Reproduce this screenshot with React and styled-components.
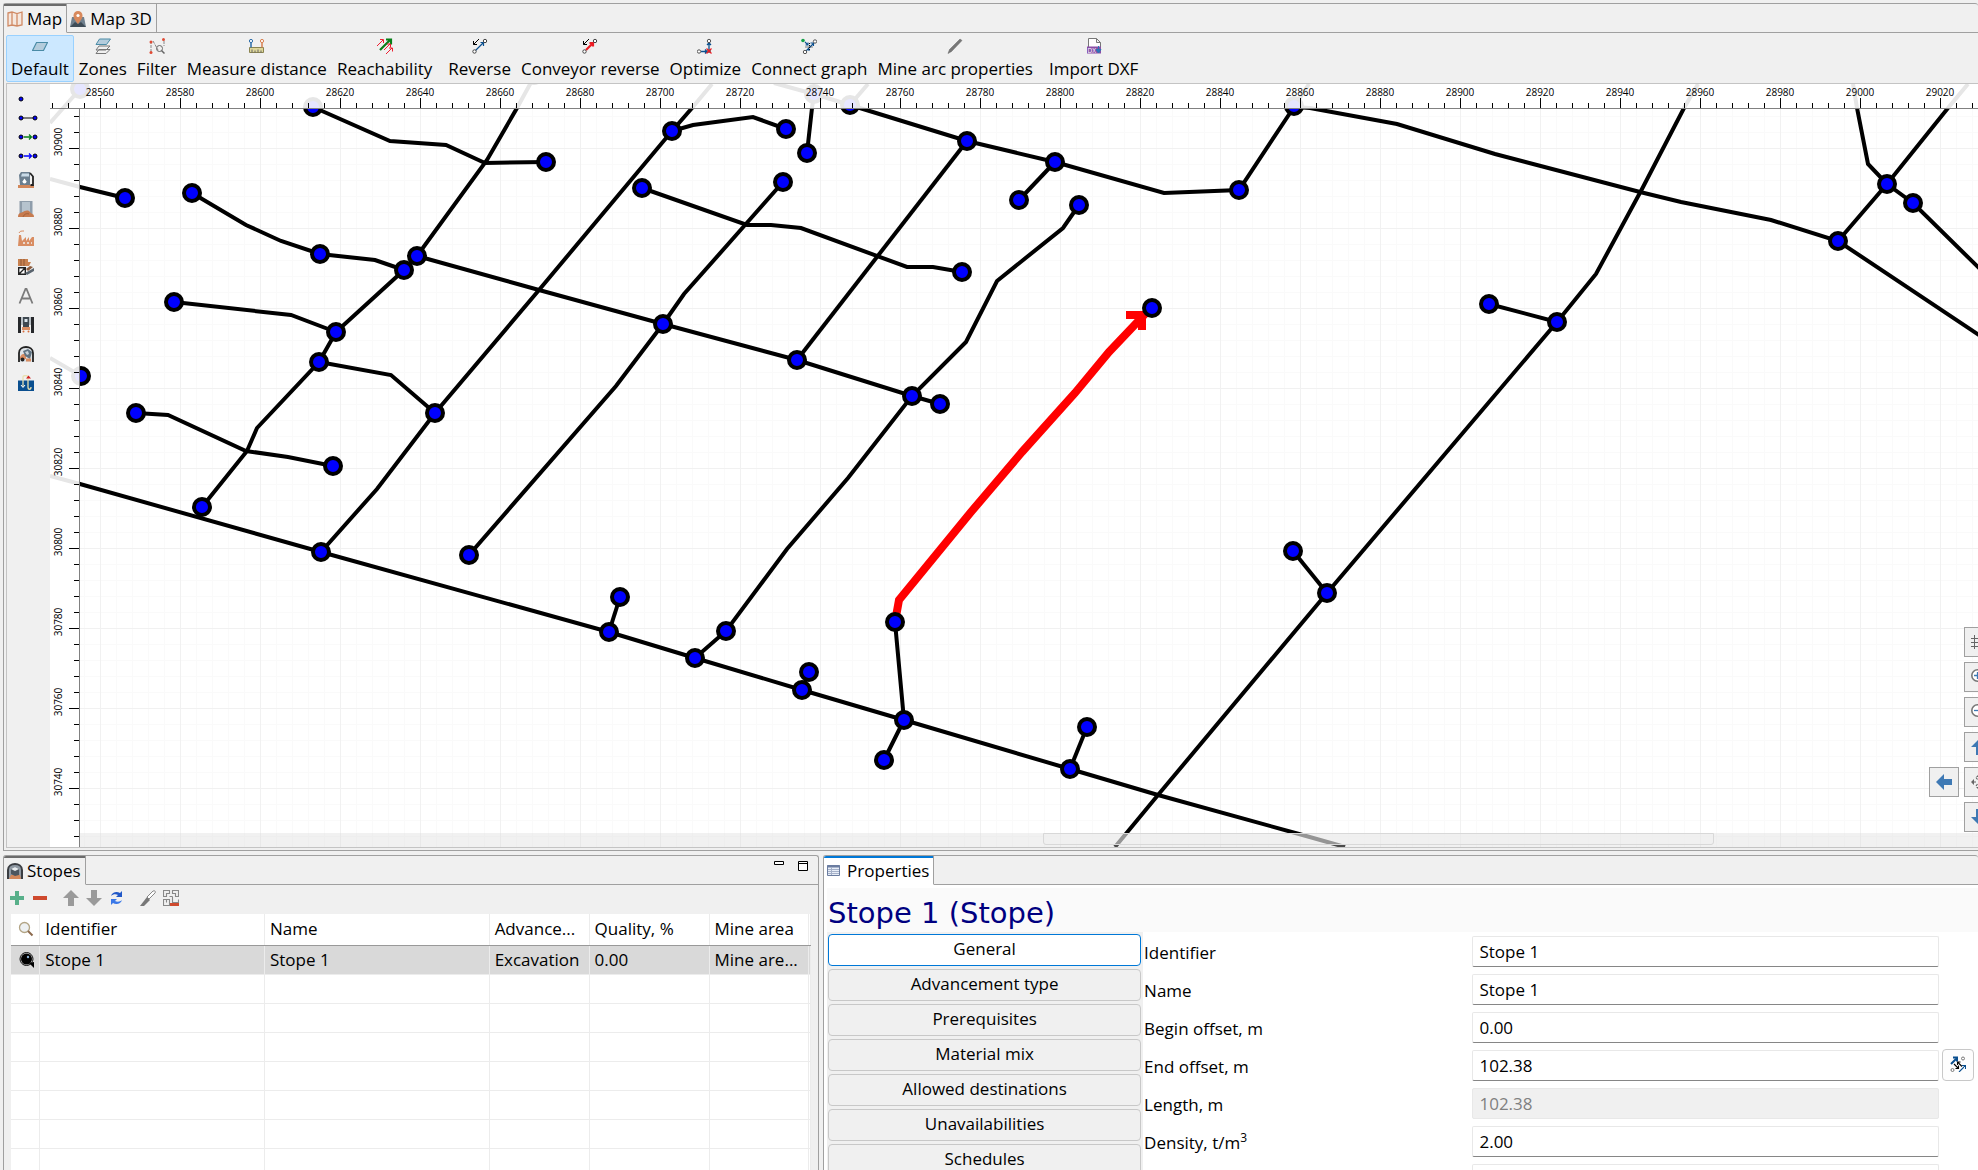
import React from "react"
import styled, { createGlobalStyle, css } from "styled-components"

//DATA
const modes = [
  { label: "Default", icon: "default", active: true },
  { label: "Zones", icon: "zones" },
  { label: "Filter", icon: "filter" },
  { label: "Measure distance", icon: "measure" },
  { label: "Reachability", icon: "reach", last: true },
  { label: "Reverse", icon: "reverse" },
  { label: "Conveyor reverse", icon: "conveyor" },
  { label: "Optimize", icon: "optimize" },
  { label: "Connect graph", icon: "connect" },
  { label: "Mine arc properties", icon: "pencil", last: true },
  { label: "Import DXF", icon: "dxf" },
]

const linkTools = ["node", "link", "greenLink", "blueLink"]
const objectTools = ["fuel", "silo", "factory", "crusher", "letter", "shaft", "tunnel", "water"]

const stopeColumns = [
  { label: "Identifier", width: "28.1%" },
  { label: "Name", width: "28.1%" },
  { label: "Advance...", width: "12.5%" },
  { label: "Quality, %", width: "15%" },
  { label: "Mine area", width: "12.5%" },
]
const stope = ["Stope 1", "Stope 1", "Excavation", "0.00", "Mine are..."]

const sections = [
  "General",
  "Advancement type",
  "Prerequisites",
  "Material mix",
  "Allowed destinations",
  "Unavailabilities",
  "Schedules",
]

const fields = [
  { id: "identifier", label: "Identifier", value: "Stope 1" },
  { id: "name", label: "Name", value: "Stope 1" },
  { id: "begin", label: "Begin offset, m", value: "0.00" },
  { id: "end", label: "End offset, m", value: "102.38", pick: true },
  { id: "length", label: "Length, m", value: "102.38", disabled: true },
  { id: "density", label: "Density, t/m", sup: "3", value: "2.00" },
  { id: "volume", label: "", value: "" },
]

// Odcinki grafu kopalni
const arcs = [
  "80,89 50,123",
  "313,107 390,141 446,145 485,163 546,162",
  "534,77 517,108 487,160 417,256",
  "672,131 693,125 753,117 786,129",
  "712,84 692,108 672,131 539,290 435,413 377,489 321,552",
  "774,83 814,94 850,105 967,141 1055,162 1164,193 1239,190 1294,107",
  "850,105 868,84",
  "814,94 812,108 807,153",
  "1294,107 1309,84",
  "50,179 80,187 125,198",
  "192,193 246,225 281,241 320,254 375,260 404,270",
  "174,302 291,315 336,332",
  "417,256 404,270 336,332 319,362 257,428 247,451 202,507",
  "319,362 391,375 435,413",
  "417,256 539,290 663,324 797,360 912,396 940,404",
  "783,182 745,225 684,294 663,324 616,386 469,555",
  "642,188 747,225 771,225 801,228 907,267 933,267 962,272",
  "967,141 797,360",
  "1055,162 1019,200",
  "1079,205 1063,228 997,281 966,342 912,396 848,478 787,549 726,631 695,658",
  "620,597 609,632",
  "50,358 81,376",
  "136,413 168,415 246,451 288,457 333,466",
  "50,476 80,484 321,552 609,632 695,658 802,690 904,720 1070,769 1158,795 1299,834 1345,847",
  "809,672 802,690",
  "895,622 904,720 884,760",
  "1087,727 1070,769",
  "1115,847 1158,795 1327,593 1557,322 1596,274 1642,189 1684,108 1698,84",
  "1293,551 1327,593",
  "1489,304 1557,322",
  "1294,107 1310,108 1397,124 1495,154 1640,192 1681,202 1771,220 1838,241 2042,377",
  "1838,241 1887,184 1948,108 1968,84",
  "1853,84 1857,108 1868,164 1887,184 1913,203 2048,336",
]

const nodes = [
  [80, 89], [313, 107], [534, 75], [546, 162], [672, 131], [786, 129], [807, 153], [783, 182],
  [642, 188], [967, 141], [1055, 162], [1019, 200], [1079, 205], [1239, 190], [1294, 106],
  [814, 94], [850, 105], [125, 198], [192, 193], [320, 254], [404, 270], [417, 256], [174, 302],
  [336, 332], [319, 362], [435, 413], [663, 324], [797, 360], [962, 272], [912, 396],
  [940, 404], [81, 376], [136, 413], [333, 466], [202, 507], [321, 552], [469, 555],
  [620, 597], [609, 632], [695, 658], [726, 631], [809, 672], [802, 690], [895, 622],
  [904, 720], [884, 760], [1070, 769], [1087, 727], [1152, 308], [1293, 551], [1327, 593],
  [1489, 304], [1557, 322], [1838, 241], [1887, 184], [1913, 203],
]

//STYLES
const GlobalStyle = createGlobalStyle`
  * {
    box-sizing: border-box;
  }
  body {
    margin: 0;
    background: #f0f0f0;
    color: #000;
    font-family: "Open Sans", "Noto Sans", sans-serif;
    font-size: 17px;
    line-height: 24px;
  }
  button,
  input {
    font: inherit;
    color: inherit;
  }
`

const Page = styled.div`
  display: grid;
  grid-template-rows: 851fr 319fr;
  height: 100vh;
  min-height: 700px;
  overflow: hidden;
`

const Panel = styled.section`
  display: flex;
  flex-direction: column;
  min-width: 0;
  min-height: 0;
  border: 1px solid #a0a0a0;
  border-radius: 3px 3px 0 0;
`

const MapPanel = styled(Panel)`
  margin: 3px 0 0 3px;
  border-right: 0;
`

const Tabs = styled.div`
  display: flex;
  flex: none;
  height: 29px;
`

const Tab = styled.button`
  display: flex;
  align-items: center;
  gap: 4px;
  flex: none;
  padding: 2px 4px 0 3px;
  border: 0;
  border-right: 1px solid #a0a0a0;
  border-bottom: 1px solid #a0a0a0;
  background: transparent;

  ${({ $active, $accent }) =>
    $active &&
    css`
      border-bottom-color: transparent;
      box-shadow: inset 0 2px 0 ${$accent || "#6b6b6b"};
    `}
`

const TabSpace = styled.div`
  display: flex;
  flex: 1;
  justify-content: flex-end;
  gap: 12px;
  padding: 5px 8px;
  border-bottom: 1px solid #a0a0a0;
`

const WindowButton = styled.button`
  display: flex;
  width: 12px;
  height: 12px;
  padding: 0;
  border: 0;
  background: none;
`

const ModeBar = styled.div`
  display: flex;
  flex: none;
  padding: 2px 2px 1px;
`

const ModeButton = styled.button`
  display: flex;
  flex-direction: column;
  align-items: center;
  gap: 3px;
  height: 47px;
  margin-right: ${({ $last }) => ($last ? "6px" : "0")};
  padding: 2px 4px 0;
  border: 1px solid ${({ $active }) => ($active ? "#99d1ff" : "transparent")};
  border-radius: 2px;
  background: ${({ $active }) => ($active ? "#cce8ff" : "transparent")};
  white-space: nowrap;
`

const MapBody = styled.div`
  display: flex;
  flex: 1;
  min-height: 0;
  margin: 0 0 2px 2px;
  border: 1px solid #c4c4c4;
  border-right: 0;
`

const Palette = styled.div`
  display: flex;
  flex-direction: column;
  flex: none;
  width: 43px;
  padding-top: 5px;
`

const PaletteButton = styled.button`
  display: flex;
  align-items: center;
  height: ${({ $small }) => ($small ? "19px" : "29px")};
  padding: 0 11px;
  border: 0;
  background: none;
`

const Canvas = styled.div`
  position: relative;
  flex: 1;
  min-width: 0;
  overflow: hidden;
  background: #fff;

  > svg {
    display: block;
    width: 100%;
    height: 100%;
  }
`

const ScrollStrip = styled.div`
  position: absolute;
  right: 0;
  bottom: 0;
  left: 30px;
  height: 14px;
  padding: 0 264px 2px 963px;
  background: rgba(215, 215, 215, 0.35);
`

const ScrollThumb = styled.div`
  height: 12px;
  border: 1px solid #d8d8d8;
  border-radius: 0 0 3px 3px;
  background: rgba(240, 240, 240, 0.45);
`

// Przyciski nawigacji po mapie
const Navigator = styled.div`
  position: absolute;
  right: -51px;
  bottom: 15px;
  display: grid;
  grid-template-columns: repeat(3, 30px);
  gap: 5px;
`

const NavButton = styled.button`
  display: flex;
  align-items: center;
  justify-content: center;
  grid-column: ${({ $column }) => $column || 2};
  height: 30px;
  padding: 0;
  border: 1px solid #a0a0a0;
  background: #f0f0f0;
`

const Bottom = styled.div`
  display: grid;
  grid-template-columns: 819fr 1159fr;
  gap: 4px;
  min-height: 0;
  padding: 4px 0 0 3px;
  overflow: hidden;
`

const StopesPanel = styled(Panel)`
  border-bottom: 0;
  overflow: hidden;
`

const StopesTools = styled.div`
  display: flex;
  align-items: center;
  flex: none;
  height: 29px;
  padding: 0 0 3px 5px;
`

const ToolButton = styled.button`
  display: flex;
  margin-right: ${({ $last }) => ($last ? "15px" : "7px")};
  padding: 0;
  border: 0;
  background: none;
`

const StopesTable = styled.table`
  width: calc(100% - 14px);
  margin-left: 7px;
  border-collapse: collapse;
  table-layout: fixed;
  background: #fff;

  th,
  td {
    overflow: hidden;
    height: 29px;
    padding: 0 0 0 5px;
    border-right: 1px solid #ececec;
    border-bottom: 1px solid #ececec;
    font-weight: 400;
    text-align: left;
    white-space: nowrap;
  }

  th {
    height: 31px;
    border-bottom-color: #999;
  }

  svg {
    display: block;
    margin-left: 2px;
  }
`

const StopeRow = styled.tr`
  background: ${({ $selected }) => ($selected ? "#d9d9d9" : "#fff")};
`

const PropertiesPanel = styled(Panel)`
  border-right: 0;
  border-bottom: 0;
  overflow: hidden;
  background: linear-gradient(#f0f0f0 29px, #fff 29px);

  ${Tab}[aria-selected="true"] {
    background: #fff;
  }
`

const Title = styled.h1`
  flex: none;
  height: 44px;
  margin: 3px 0 0 3px;
  padding-left: 1px;
  background: #fafafa;
  color: #000080;
  font-family: Verdana, "DejaVu Sans", sans-serif;
  font-size: 29px;
  font-weight: 400;
  line-height: 50px;
`

const PropertiesBody = styled.div`
  display: flex;
  align-items: flex-start;
  min-height: 0;
  padding-left: 3px;
`

const SectionList = styled.nav`
  display: flex;
  flex-direction: column;
  flex: 0 0 316px;
  gap: 3px;
  padding: 2px 2px 0 1px;
  background: #f0f0f0;
`

const SectionButton = styled.button`
  height: 32px;
  padding: 0 0 2px;
  border: 1px solid ${({ $active }) => ($active ? "#0078d7" : "#c8c8c8")};
  border-radius: 4px;
  background: ${({ $active }) => ($active ? "#fff" : "#f0f0f0")};
`

const Form = styled.form`
  display: flex;
  flex-direction: column;
  flex: 1;
  gap: 7px;
  padding: 4px 0 0 1px;
`

const Field = styled.div`
  display: grid;
  grid-template-columns: 328fr 466fr 39px;
  grid-template-rows: 31px;

  label {
    padding-top: 5px;
  }

  sup {
    font-size: 12px;
    line-height: 0;
  }

  input {
    min-width: 0;
    height: 31px;
    padding: 0 6px;
    border: 1px solid #e8e8e8;
    border-bottom-color: #868686;
    border-radius: 2px;
    background: #fff;
  }

  input:disabled {
    border-bottom-color: #e8e8e8;
    background: #f0f0f0;
    color: #808080;
  }
`

const PickButton = styled.button`
  display: flex;
  align-items: center;
  justify-content: center;
  align-self: end;
  width: 32px;
  height: 32px;
  margin-left: 3px;
  padding: 0 0 2px;
  border: 1px solid #c8c8c8;
  border-radius: 4px;
  background: #fdfdfd;
`

//COMPONENTS
const shapes = {
  default: <path d="M4.500 4.500h11l-4 8h-11z" fill="#b4ccdc" stroke="#4a8ba6" strokeWidth="1.200" />,
  zones: (
    <>
      <path d="M4 11.500h11l-4 4h-10z M4 8h11l-4 4h-10z" fill="#f0f0f0" stroke="#777" />
      <path d="M4.500 1h11l-4 5.500h-10.500z" fill="#b4ccdc" stroke="#4a8ba6" />
    </>
  ),
  filter: (
    <>
      <path d="M2 14V4M4 3l5 9M15 3v5" stroke="#888" strokeDasharray="3 1" fill="none" />
      <circle cx="10.500" cy="10.500" r="3" fill="none" stroke="#666" />
      <path d="M12.500 12.500l3 3" stroke="#666" strokeWidth="1.500" />
      <g fill="#e04b35">
        <circle cx="2" cy="4" r="1.500" />
        <circle cx="2" cy="14.500" r="1.500" />
        <circle cx="14.500" cy="1.500" r="1.500" />
      </g>
    </>
  ),
  measure: (
    <>
      <path d="M.5 9.500h14v5H.5z" fill="#ddd69a" stroke="#8a8450" />
      <path d="M3 14.500v-3M6 14.500v-2M9 14.500v-3M12 14.500v-2" stroke="#666" />
      <path d="M2 4.500v5" stroke="#2a6ca8" strokeWidth="1.500" />
      <path d="M13 4.500v5" stroke="#d88050" strokeWidth="1.500" />
      <circle cx="2" cy="3" r="1.600" fill="#fff" stroke="#2a6ca8" />
      <circle cx="13" cy="3" r="1.600" fill="#fff" stroke="#d88050" />
    </>
  ),
  reach: (
    <>
      <path d="M3 12L13 2M9 1.500h5v5" fill="none" stroke="#078018" strokeWidth="2.200" />
      <path d="M0 8l6-6M3 1.500h3.500V5M7 12l6-6M10 6h3.500v3.500M9 16l6-6M12 10h3.500v3.500" fill="none" stroke="#ec2031" />
    </>
  ),
  reverse: (
    <>
      <path d="M7 1L1.500 6.500M1.500 3v3.500H5" fill="none" stroke="#000" />
      <path d="M3.500 12.500l8-8M8.500 4.500h3V8" fill="none" stroke="#0a4f8f" strokeWidth="1.200" />
      <circle cx="2.500" cy="13.500" r="1.700" fill="#fff" stroke="#444" />
      <circle cx="13" cy="3" r="1.700" fill="#fff" stroke="#444" />
    </>
  ),
  conveyor: (
    <>
      <path d="M7 1L1.500 6.500M1.500 3v3.500H5" fill="none" stroke="#000" />
      <path d="M4 12l7-7M7.500 5H11v3.500" fill="none" stroke="#ed1c24" strokeWidth="2.200" />
      <circle cx="2.500" cy="13.500" r="1.700" fill="#fff" stroke="#444" />
      <circle cx="13" cy="3" r="1.700" fill="#fff" stroke="#444" />
    </>
  ),
  optimize: (
    <>
      <path d="M4 13.500h6M8 11.500l2 2-2 2M12 11V5M10 7l2-2 2 2" fill="none" stroke="#0a4f8f" strokeWidth="1.300" />
      <circle cx="2" cy="13.500" r="1.700" fill="#fff" stroke="#555" />
      <circle cx="12" cy="3" r="1.700" fill="#fff" stroke="#555" />
      <circle cx="12" cy="13" r="2" fill="#666" />
      <path d="M9.500 10.500l5 5m0-5l-5 5" stroke="#ed1c24" strokeWidth="1.200" />
    </>
  ),
  connect: (
    <>
      <path d="M4 4l3 3M7 4.500V7H4.500M5 13l8-8M9.500 5h3v3M8 13V9.500" fill="none" stroke="#0a4f8f" strokeWidth="1.100" />
      <path d="M8.500 5v8M4.500 9h8" stroke="#111" strokeDasharray="1 1" />
      <circle cx="2" cy="2.500" r="1.800" fill="#14a048" />
      <circle cx="14" cy="3.500" r="1.700" fill="#fff" stroke="#555" />
      <circle cx="4" cy="14" r="1.700" fill="#fff" stroke="#555" />
    </>
  ),
  pencil: <path d="M1 15.500l1.500-4L13 1l2 1.500L4.500 13.500z" fill="#777" stroke="#666" strokeWidth=".5" />,
  dxf: (
    <>
      <path d="M2.500 9V.5h8l4 4V9M10.500.5v4h4" fill="#fff" stroke="#777" />
      <rect x="1" y="8.500" width="14" height="7" fill="#8a4fa8" />
      <text x="1.500" y="14.500" fontSize="6.500" fill="#fff">
        DX
      </text>
      <path d="M12.500 8v6M10 11.500l2.500 3.500 2.500-3.500z" fill="#2e75b6" stroke="#2e75b6" />
    </>
  ),
  node: <circle cx="3" cy="8" r="2" fill="#00f" stroke="#000" />,
  link: (
    <>
      <path d="M3 8h14" stroke="#555" strokeWidth="1.500" />
      <circle cx="3" cy="8" r="2" fill="#00f" stroke="#000" />
      <circle cx="17" cy="8" r="2" fill="#00f" stroke="#000" />
    </>
  ),
  greenLink: (
    <>
      <path d="M6 8h7M11 5.500L13.500 8 11 10.500" fill="none" stroke="#078018" strokeWidth="1.300" />
      <circle cx="3" cy="8" r="2" fill="#00f" stroke="#000" />
      <circle cx="17" cy="8" r="2" fill="#00f" stroke="#000" />
    </>
  ),
  blueLink: (
    <>
      <path d="M6 8h7M11 5.500L13.500 8 11 10.500" fill="none" stroke="#00f" strokeWidth="1.300" />
      <circle cx="3" cy="8" r="2" fill="#00f" stroke="#000" />
      <circle cx="17" cy="8" r="2" fill="#00f" stroke="#000" />
    </>
  ),
  fuel: (
    <>
      <rect x="0" y="13" width="16" height="3" fill="#d2875a" />
      <path d="M1 3l2-3h9v13H2z" fill="#6b7f90" />
      <path d="M4 1.500h7v3H3z" fill="#c9dbe8" />
      <path d="M6.500 6.500l2 3a2 2 0 1 1-4 0z" fill="#fff" />
      <path d="M12 1l3 3.500V13h-2.500" fill="none" stroke="#222" strokeWidth="1.800" />
    </>
  ),
  silo: (
    <>
      <path d="M1.500 0h13v13h-13z" fill="#8f9dab" />
      <path d="M4 1h8v10H4z" fill="#b6c3ce" />
      <path d="M0 16c0-5 4-4 5-5s5-3 7 0 4 1 4 5z" fill="#c77b4f" />
      <path d="M5 16c1-3 4-4 6-3" stroke="#a35f38" fill="none" />
    </>
  ),
  factory: (
    <>
      <path d="M0 16L1 5h2l1 6 4-4v4l3-4v4l3-4h2v9z" fill="#d98d62" />
      <path d="M1 3c1-2 2-2 5-2" stroke="#d98d62" fill="none" />
      <path d="M5 13h2M9 13h2M13 13h1" stroke="#f0f0f0" strokeWidth="1.500" />
    </>
  ),
  crusher: (
    <>
      <path d="M0 0h10v3h3L11 7H0z" fill="#c8814f" />
      <path d="M3 0v7M6 0v7" stroke="#8f5732" />
      <path d="M.7 8.700h6.600v6.600H.7zM1 15l6-6" fill="#fff" stroke="#222" strokeWidth="1.400" />
      <path d="M7 14l9-5v3l-7 4z" fill="#59646e" />
      <path d="M8 10l4-3 3 1-5 4z" fill="#8a5a3c" />
    </>
  ),
  letter: <path d="M1.500 15.500L7.500 1h1l6 14.500M4 10.500h8" fill="none" stroke="#7b7b7b" strokeWidth="1.800" />,
  shaft: (
    <>
      <path d="M0 0h3v16H0zM13 0h3v16h-3z" fill="#26282b" />
      <path d="M3 0h2v8H3zM11 0h2v8h-2z" fill="#b9c0c6" />
      <path d="M5 0h6v10H5z" fill="#3f4850" />
      <path d="M6.500 2h3v3h-3z" fill="#dbe4ea" />
      <path d="M4 10h8v3H4z" fill="#d98d62" />
      <circle cx="5.500" cy="14.500" r="1" fill="#d96c3a" />
      <circle cx="10.500" cy="14.500" r="1" fill="#d96c3a" />
    </>
  ),
  tunnel: (
    <>
      <path d="M1 16V7c0-8 14-8 14 0v9" fill="#dfe4e8" stroke="#222" strokeWidth="1.800" />
      <path d="M2 11c1-3 4-4 6-3v5H2z" fill="#d98d62" />
      <path d="M5 5l5-2 4 3-2 7-5-3z" fill="#5f7382" />
      <path d="M7 6l3-1 1 3-2 1z" fill="#c9d3da" />
      <circle cx="4.500" cy="13.500" r="2" fill="#222" />
      <path d="M8 14h5" stroke="#d98d62" strokeWidth="3" />
    </>
  ),
  water: (
    <>
      <rect x="0" y="5.500" width="16" height="10.500" fill="#0a4f8f" />
      <path d="M5 12V2c0-2 5-2 5 0v10c0 3 3 3 3 0" fill="none" stroke="#e8e0b0" strokeWidth="1.300" />
      <path d="M3 10l2 2.500L7 10" fill="none" stroke="#fff" />
      <path d="M8 3.500L10.500.5 13 3.500z" fill="#d02020" />
    </>
  ),
  map: (
    <path d="M1 2l4-1 5 1.500 5-1.500v13l-5 1-5-1-4 1zM5 1v13M10 2.500V15" fill="#f5e8df" stroke="#d08a64" strokeWidth="1.300" />
  ),
  map3d: (
    <>
      <path d="M2 6h12l2 10H0z" fill="#70808e" />
      <path d="M0 16l5-5 3 2 3-2 5 5z" fill="#3f4c57" />
      <path d="M8 13C4 8 3.500 6.500 3.500 4.500a4.500 4.500 0 0 1 9 0C12.500 6.500 12 8 8 13z" fill="#d8895c" />
      <circle cx="8" cy="4.500" r="1.600" fill="#fff" />
    </>
  ),
  stopes: (
    <>
      <path d="M1 16V7c0-8 14-8 14 0v9" fill="#8f99a3" stroke="#3a3d42" strokeWidth="2" />
      <path d="M2 16l2-4h9l1 4z" fill="#d2875a" />
      <path d="M4 6l4-2 4 2v6l-4 1-4-2z" fill="#4c565f" />
      <path d="M4 6l4-2 4 2-4 2z" fill="#e9edf0" />
    </>
  ),
  sheet: (
    <>
      <path d="M.5 2.500h12v10H.5z" fill="#e8eef8" stroke="#6b7da0" />
      <path d="M0 3.500h13" stroke="#6b7da0" strokeWidth="2" />
      <path d="M1 6.500h11M1 8.500h11M1 10.500h11M4.500 4v8" stroke="#a5b1c9" />
    </>
  ),
  plus: <path d="M6 1h4v5h5v4h-5v5H6v-5H1V6h5z" fill="#58b08a" />,
  minus: <path d="M1 6h14v4H1z" fill="#cf4a2e" />,
  up: <path d="M8 0l8 8h-5v8H5V8H0z" fill="#9a9a9a" />,
  down: <path d="M8 16L0 8h5V0h6v8h5z" fill="#9a9a9a" />,
  refresh: (
    <>
      <path d="M2 6c1-4 6-5 9-3l2-2v6H7l2-2c-2-1-5-1-7 1z" fill="#2158c8" />
      <path d="M13 10c-1 4-6 5-9 3l-2 2V9h6l-2 2c2 1 5 1 7-1z" fill="#3a78e8" />
    </>
  ),
  brush: (
    <>
      <path d="M0 16l7-9 3 3-6 6z" fill="#777" />
      <path d="M7 7l6-6c2-1 3 1 2 2l-6 6z" fill="#fff" stroke="#888" />
    </>
  ),
  maze: (
    <>
      <path d="M.5.5h6v3h-3v3h-3zM9.500.5h6v6h-3v-3h-3zM.5 9.500h6v6h-6zM3.500 9.500v3M9.500 6.500v6h6v-3M6.500 6.500h3" fill="none" stroke="#888" strokeWidth="1.100" />
      <path d="M7 13h9v3H7z" fill="#cf4a2e" />
    </>
  ),
  lens: (
    <>
      <circle cx="6.500" cy="6.500" r="5" fill="#edf0f2" stroke="#b3a586" strokeWidth="1.300" />
      <path d="M10 10l4.500 4.500" stroke="#8c6a4d" strokeWidth="2" />
    </>
  ),
  lensDark: (
    <>
      <circle cx="8.500" cy="7" r="6.500" fill="none" stroke="#111" />
      <circle cx="8.500" cy="7" r="5.500" fill="#000" />
      <circle cx="10" cy="5" r="1.200" fill="#8fb4d8" />
      <path d="M11 11l5 5v-6z" fill="#000" />
    </>
  ),
  minimize: <path d="M.5.500h9v3h-9z" fill="#fff" stroke="#000" />,
  maximize: <path d="M.5.500h9v9h-9zM.5 2.500h9" fill="#fff" stroke="#000" />,
  grid: <path d="M3.500 1v14M9.500 1v14M0 4.500h14M0 8.500h14M0 12.500h14" stroke="#666" />,
  zoomIn: (
    <>
      <circle cx="6.500" cy="6.500" r="5.700" fill="#fff" stroke="#777" strokeWidth="1.600" />
      <path d="M3 6.500h7M6.500 3v7" stroke="#3e79b4" strokeWidth="1.300" />
      <path d="M11 11l4 4" stroke="#777" strokeWidth="2" />
    </>
  ),
  zoomOut: (
    <>
      <circle cx="6.500" cy="6.500" r="5.700" fill="#fff" stroke="#777" strokeWidth="1.600" />
      <path d="M3 6.500h7" stroke="#3e79b4" strokeWidth="1.300" />
      <path d="M11 11l4 4" stroke="#777" strokeWidth="2" />
    </>
  ),
  goUp: <path d="M8 0l8 8h-5v8H5V8H0z" fill="#3e79b4" />,
  goDown: <path d="M8 16L0 8h5V0h6v8h5z" fill="#3e79b4" />,
  goLeft: <path d="M0 8l8-8v5h8v6H8v5z" fill="#3e79b4" />,
  center: (
    <>
      <path d="M1 8h4M11 8h4M8 1v4M8 11v4M5 3.500l1.500 2M5 12l1.500-2" stroke="#666" strokeWidth="1.200" />
      <path d="M0 8l3-3v6zM16 8l-3-3v6zM8 0l3 3H5zM8 16l3-3H5z" fill="#666" />
    </>
  ),
  pick: (
    <>
      <path d="M1 8l5-5M3 1.500h4V5.500" fill="none" stroke="#0a4f8f" strokeWidth="2" />
      <path d="M9 16l6-6M12 9.500h3.500V13" fill="none" stroke="#0a4f8f" strokeWidth="1.100" />
      <path d="M4 8l4 4M8.500 9.500v3h-3M8 6.500l4 4M7.500 9V6h3" fill="none" stroke="#000" strokeWidth="1.100" />
      <circle cx="13" cy="2.500" r="1.500" fill="none" stroke="#777" />
      <circle cx="2.500" cy="14" r="1.500" fill="none" stroke="#777" />
    </>
  ),
}

const Icon = ({ name, width = 16 }) => (
  <svg width={width} height="16" viewBox={`0 0 ${width} 16`} aria-hidden="true">
    {shapes[name]}
  </svg>
)

const range = (count) => Array.from({ length: count }, (_, i) => i)

const Rulers = () => (
  <g shapeRendering="crispEdges">
    <path d="M50 84H4000V108H80V900H50z" fill="#fff" fillOpacity=".9" />
    <path d="M50 108.500H4000M79.500 108V900" stroke="#808080" />
    <path
      d={range(240)
        .map((i) => `M${52 + i * 16}.5 108v${i % 5 === 3 ? -10 : -5}`)
        .join("")}
      stroke="#000"
    />
    <path
      d={range(48)
        .map((i) => `M79 ${116 + i * 16}.5h${i % 5 === 2 ? -10 : -5}`)
        .join("")}
      stroke="#000"
    />
  </g>
)

const RulerLabels = () => (
  <g fontFamily='"Open Sans", sans-serif' fontSize="10" textAnchor="middle">
    {range(24).map((i) => (
      <text key={i} x={100 + i * 80} y="96">
        {28560 + i * 20}
      </text>
    ))}
    {range(9).map((i) => (
      <text key={i} transform={`translate(62 ${142 + i * 80}) rotate(-90)`}>
        {30900 - i * 20}
      </text>
    ))}
  </g>
)

const MineMap = () => (
  <svg role="img" aria-label="Mine graph">
    <defs>
      <pattern id="grid" x="4" y="0" width="80" height="80" patternUnits="userSpaceOnUse" patternTransform="translate(16 68)">
        <path d="M16.500 0v80M32.500 0v80M48.500 0v80M64.500 0v80M0 16.500h80M0 32.500h80M0 48.500h80M0 64.500h80" stroke="#fafafa" />
        <path d="M.5 0v80M0 .5h80" stroke="#f1f1f1" />
      </pattern>
    </defs>
    <g transform="translate(-50 -84)">
      <rect x="50" y="84" width="4000" height="900" fill="url(#grid)" />
      <g fill="none" stroke="#000" strokeWidth="4">
        {arcs.map((points) => (
          <polyline key={points} points={points} />
        ))}
      </g>
      <g fill="none" stroke="#f00" strokeWidth="8">
        <polyline points="895,622 899,600 971,512 1022,452 1075,393 1109,352 1146,313" />
        <polyline points="1126,315 1142,315 1142,330" />
      </g>
      <g fill="#00f" stroke="#000" strokeWidth="4">
        {nodes.map(([x, y]) => (
          <circle key={`${x}-${y}`} cx={x} cy={y} r="8" />
        ))}
      </g>
      <Rulers />
      <RulerLabels />
    </g>
  </svg>
)

const Stopes = () => (
  <StopesPanel>
    <Tabs role="tablist">
      <Tab role="tab" aria-selected="true" $active>
        <Icon name="stopes" />
        Stopes
      </Tab>
      <TabSpace>
        <WindowButton aria-label="Minimize">
          <Icon name="minimize" width={11} />
        </WindowButton>
        <WindowButton aria-label="Maximize">
          <Icon name="maximize" width={11} />
        </WindowButton>
      </TabSpace>
    </Tabs>
    <StopesTools>
      {["plus", "minus", "up", "down", "refresh", "brush", "maze"].map((name) => (
        <ToolButton key={name} aria-label={name} $last={name === "minus" || name === "refresh"}>
          <Icon name={name} />
        </ToolButton>
      ))}
    </StopesTools>
    <StopesTable>
      <colgroup>
        <col style={{ width: "3.6%" }} />
        {stopeColumns.map((column) => (
          <col key={column.label} style={{ width: column.width }} />
        ))}
        <col />
      </colgroup>
      <thead>
        <tr>
          <th>
            <Icon name="lens" />
          </th>
          {stopeColumns.map((column) => (
            <th key={column.label}>{column.label}</th>
          ))}
          <th />
        </tr>
      </thead>
      <tbody>
        <StopeRow $selected>
          <td>
            <Icon name="lensDark" />
          </td>
          {stope.map((value, i) => (
            <td key={i}>{value}</td>
          ))}
          <td />
        </StopeRow>
        {range(7).map((i) => (
          <StopeRow key={i}>
            {range(7).map((j) => (
              <td key={j} />
            ))}
          </StopeRow>
        ))}
      </tbody>
    </StopesTable>
  </StopesPanel>
)

const Properties = () => (
  <PropertiesPanel>
    <Tabs role="tablist">
      <Tab role="tab" aria-selected="true" $active $accent="#0078d7">
        <Icon name="sheet" />
        Properties
      </Tab>
      <TabSpace />
    </Tabs>
    <Title>Stope 1 (Stope)</Title>
    <PropertiesBody>
      <SectionList>
        {sections.map((section, i) => (
          <SectionButton key={section} $active={i === 0}>
            {section}
          </SectionButton>
        ))}
      </SectionList>
      <Form>
        {fields.map((field) => (
          <Field key={field.id}>
            <label htmlFor={field.id}>
              {field.label}
              {field.sup && <sup>{field.sup}</sup>}
            </label>
            <input id={field.id} defaultValue={field.value} disabled={field.disabled} />
            {field.pick && (
              <PickButton type="button" aria-label="Pick on map">
                <Icon name="pick" />
              </PickButton>
            )}
          </Field>
        ))}
      </Form>
    </PropertiesBody>
  </PropertiesPanel>
)

export default function App() {
  return (
    <Page>
      <GlobalStyle />
      <MapPanel>
        <Tabs role="tablist">
          <Tab role="tab" aria-selected="true" $active>
            <Icon name="map" />
            Map
          </Tab>
          <Tab role="tab" aria-selected="false">
            <Icon name="map3d" />
            Map 3D
          </Tab>
          <TabSpace />
        </Tabs>
        <ModeBar>
          {modes.map((mode) => (
            <ModeButton key={mode.label} $active={mode.active} $last={mode.last}>
              <Icon name={mode.icon} />
              {mode.label}
            </ModeButton>
          ))}
        </ModeBar>
        <MapBody>
          <Palette>
            {linkTools.map((name) => (
              <PaletteButton key={name} aria-label={name} $small>
                <Icon name={name} width={20} />
              </PaletteButton>
            ))}
            {objectTools.map((name) => (
              <PaletteButton key={name} aria-label={name}>
                <Icon name={name} />
              </PaletteButton>
            ))}
          </Palette>
          <Canvas>
            <MineMap />
            <ScrollStrip>
              <ScrollThumb />
            </ScrollStrip>
            <Navigator>
              <NavButton aria-label="Grid">
                <Icon name="grid" />
              </NavButton>
              <NavButton aria-label="Zoom in">
                <Icon name="zoomIn" />
              </NavButton>
              <NavButton aria-label="Zoom out">
                <Icon name="zoomOut" />
              </NavButton>
              <NavButton aria-label="Up">
                <Icon name="goUp" />
              </NavButton>
              <NavButton aria-label="Left" $column={1}>
                <Icon name="goLeft" />
              </NavButton>
              <NavButton aria-label="Center">
                <Icon name="center" />
              </NavButton>
              <NavButton aria-label="Down">
                <Icon name="goDown" />
              </NavButton>
            </Navigator>
          </Canvas>
        </MapBody>
      </MapPanel>
      <Bottom>
        <Stopes />
        <Properties />
      </Bottom>
    </Page>
  )
}
